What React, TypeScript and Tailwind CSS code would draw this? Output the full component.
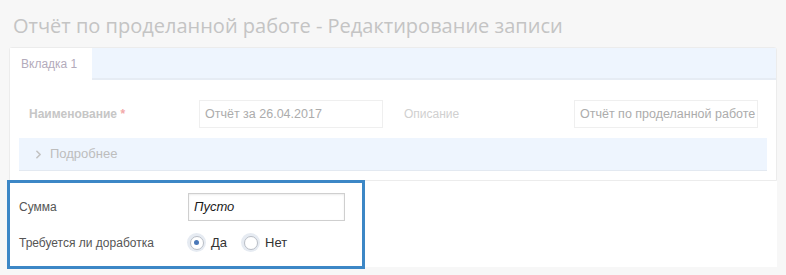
import { ChevronRight } from "lucide-react";

function Radio({ checked, label }: { checked?: boolean; label: string }) {
  return (
    <label className="flex items-center gap-[5px]">
      <span className="flex h-[19px] w-[19px] items-center justify-center rounded-full bg-[#e6ebf2]">
        <span className="flex h-[14px] w-[14px] items-center justify-center rounded-full border border-[#b9bec6] bg-white">
          {checked && <span className="h-[5px] w-[5px] rounded-full bg-[#4a78b8]" />}
        </span>
      </span>
      <span className="text-[13px] text-[#333]">{label}</span>
    </label>
  );
}

export default function App() {
  return (
    <div className="h-[275px] w-[786px] overflow-hidden bg-[#f7f7f7] font-['Liberation_Sans',Arial,sans-serif]">
      {/* Title */}
      <h1 className="pl-[13px] pt-[11px] font-['Open_Sans',sans-serif] text-[20px] leading-[30px] text-[#c4c4c4]">
        Отчёт по проделанной работе - Редактирование записи
      </h1>

      {/* Faded card */}
      <div className="ml-[9px] mt-[6px] w-[768px] rounded-t-[3px] border border-[#ececec] bg-white">
        <div className="flex h-[32px] border-b-2 border-[#e6ecf4] bg-[#eef5fe]">
          <div className="-mb-[2px] flex w-[82px] items-center bg-white pl-[11px] text-[12px] text-[#b3abbb]">
            Вкладка 1
          </div>
        </div>

        <div className="flex items-center pt-[20px]">
          <div className="w-[189px] pl-[19px] text-[12px] font-bold text-[#c6c6c6]">
            Наименование <span className="text-[#f2a9a9]">*</span>
          </div>
          <div className="flex h-[28px] w-[184px] items-center border border-[#efefef] px-[5px] text-[12.5px] text-[#acacac]">
            Отчёт за 26.04.2017
          </div>
          <div className="ml-[21px] w-[170px] text-[12px] text-[#d0d0d0]">Описание</div>
          <div className="flex h-[28px] w-[184px] items-center overflow-hidden whitespace-nowrap border border-[#efefef] px-[5px] text-[12.5px] text-[#acacac]">
            Отчёт по проделанной работе
          </div>
        </div>

        <div className="mx-[9px] mb-[9px] mt-[10px] flex h-[33px] items-center gap-[5px] border-b border-[#e3e9f1] bg-[#eef5fe] pl-[13px] text-[13px] text-[#bdbdbd]">
          <ChevronRight className="h-[13px] w-[13px] text-[#c2c2c2]" strokeWidth={3} />
          Подробнее
        </div>
      </div>

      {/* Highlighted section */}
      <div className="relative ml-[9px] h-[86px] w-[768px] bg-white">
        <div className="flex items-center pt-[12px]">
          <div className="w-[179px] pl-[10px] text-[12px] text-[#555]">Сумма</div>
          <div className="flex h-[28px] w-[157px] items-center border border-[#cfcfcf] px-[5px] text-[13px] italic text-[#1a1a1a] shadow-[inset_0_1px_2px_rgba(0,0,0,0.08)]">
            Пусто
          </div>
        </div>
        <div className="mt-[12px] flex items-center">
          <div className="w-[178px] pl-[10px] text-[12px] text-[#555]">Требуется ли доработка</div>
          <div className="flex items-center gap-[14px]">
            <Radio checked label="Да" />
            <Radio label="Нет" />
          </div>
        </div>
        <div className="pointer-events-none absolute -left-[2px] -top-[1px] h-[89px] w-[358px] border-[3px] border-[#3c87c6]" />
      </div>
    </div>
  );
}
